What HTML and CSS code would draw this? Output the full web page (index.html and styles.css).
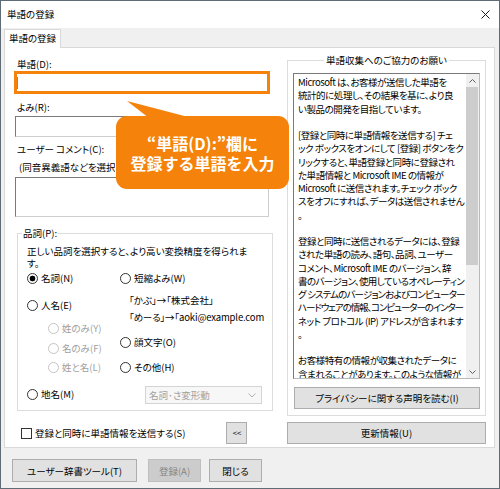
FILE: index.html
```html
<!DOCTYPE html>
<html lang="ja">
<head>
<meta charset="utf-8">
<title>単語の登録</title>
<link rel="stylesheet" href="styles.css">
</head>
<body>
<div class="window">
  <div class="titlebar">
    <span class="title">単語の登録</span>
    <svg class="close" width="9" height="9" viewBox="0 0 9 9"><path d="M0.5 0.5L8.5 8.5M8.5 0.5L0.5 8.5" stroke="#1a1a1a" stroke-width="1"/></svg>
  </div>
  <div class="body">
    <div class="tabs"><div class="tab">単語の登録</div></div>
    <div class="panel">
      <div class="left">
        <div class="label">単語(D):</div>
        <div class="highlight"><span class="caret"></span></div>
        <div class="label l-yomi">よみ(R):</div>
        <div class="input"></div>
        <div class="label l-comment">ユーザー コメント(C):</div>
        <div class="hint">(同音異義語などを選択するときに表示されます)</div>
        <div class="input textarea"></div>
        <div class="group pos">
          <span class="legend">品詞(P):</span>
          <p class="desc">正しい品詞を選択すると、より高い変換精度を得られま<br>す。</p>
          <div class="options">
            <div class="col">
              <div class="r"><span class="radio on"></span>名詞(N)</div>
              <div class="r a2"><span class="radio"></span>人名(E)</div>
              <div class="r dis a3"><span class="radio"></span>姓のみ(Y)</div>
              <div class="r dis a4"><span class="radio"></span>名のみ(F)</div>
              <div class="r dis a5"><span class="radio"></span>姓と名(L)</div>
              <div class="r a6"><span class="radio"></span>地名(M)</div>
            </div>
            <div class="col">
              <div class="r"><span class="radio"></span>短縮よみ(W)</div>
              <div class="ex b2">「かぶ」→「株式会社」</div>
              <div class="ex b3">「めーる」→「aoki@example.com</div>
              <div class="r b4"><span class="radio"></span>顔文字(O)</div>
              <div class="r b5"><span class="radio"></span>その他(H)</div>
              <div class="select">
                <span>名詞･さ変形動</span>
                <svg width="8" height="5" viewBox="0 0 8 5"><path d="M0.5 0.5L4 4L7.5 0.5" fill="none" stroke="#b0b0b0" stroke-width="1"/></svg>
              </div>
            </div>
          </div>
        </div>
      </div>

      <div class="right">
        <div class="group info">
          <span class="legend center">単語収集へのご協力のお願い</span>
          <div class="textbox">
            <div class="tb-text">Microsoft は、お客様が送信した単語を<br>統計的に処理し、その結果を基に、より良<br>い製品の開発を目指しています。<br><br>[登録と同時に単語情報を送信する] チェ<br>ック ボックスをオンにして [登録] ボタンをク<br>リックすると、単語登録と同時に登録され<br>た単語情報と Microsoft IME の情報が<br>Microsoft に送信されます。チェック ボック<br>スをオフにすれば、データは送信されません<br>。<br><br>登録と同時に送信されるデータには、登録<br>された単語の読み、語句、品詞、ユーザー<br>コメント、Microsoft IME のバージョン、辞<br><span class="tight">書のバージョン、使用しているオペレーティン</span><br><span class="tighter">グ システムのバージョンおよびコンピューター</span><br><span class="tightest">ハードウェアの情報、コンピューターのインター</span><br>ネット プロトコル (IP) アドレスが含まれます<br>。<br><br>お客様特有の情報が収集されたデータに<br>含まれることがあります。このような情報が</div>
            <div class="sb">
              <div class="arrow"><svg width="7" height="4" viewBox="0 0 7 4"><path d="M0.5 3.5L3.5 0.5L6.5 3.5" fill="none" stroke="#606060" stroke-width="1"/></svg></div>
              <div class="thumb"></div>
              <div class="track"></div>
              <div class="arrow"><svg width="7" height="4" viewBox="0 0 7 4"><path d="M0.5 0.5L3.5 3.5L6.5 0.5" fill="none" stroke="#606060" stroke-width="1"/></svg></div>
            </div>
          </div>
          <button class="btn privacy">プライバシーに関する声明を読む(I)</button>
        </div>
      </div>

      <div class="send">
        <span class="check"></span>
        <span>登録と同時に単語情報を送信する(S)</span>
        <button class="btn back">&lt; &lt;</button>
      </div>
      <button class="btn update">更新情報(U)</button>
    </div>

    <div class="footer">
      <button class="btn f1">ユーザー辞書ツール(T)</button>
      <button class="btn f2" disabled>登録(A)</button>
      <button class="btn f3">閉じる</button>
    </div>
  </div>

  <div class="callout">
    <span>“単語(D):”欄に</span>
    <span>登録する単語を入力</span>
  </div>
</div>
</body>
</html>
```

FILE: styles.css
```css
* { box-sizing: border-box; }
html, body { margin: 0; padding: 0; }
body {
  width: 500px;
  height: 489px;
  overflow: hidden;
  background: #fff;
  font-family: "Noto Sans CJK JP", "Noto Sans", sans-serif;
  font-size: 9.5px;
  line-height: 14px;
  color: #000;
  font-feature-settings: "palt" 1;
}

.window {
  position: relative;
  width: 500px;
  height: 489px;
  border: 1px solid #5f6b75;
  background: #f0f0f0;
  display: flex;
  flex-direction: column;
}

.titlebar {
  flex: none;
  height: 27px;
  background: #fff;
  display: flex;
  align-items: center;
  justify-content: space-between;
  padding: 0 9px 1px 6px;
}
.close { display: block; }

.body {
  flex: 1;
  padding: 1px 4px 0 3px;
}

.tabs { display: flex; height: 18px; }
.tab {
  position: relative;
  z-index: 1;
  width: 57px;
  height: 19px;
  margin-bottom: -1px;
  border: 1px solid #d9d9d9;
  border-bottom: none;
  background: #fff;
  text-align: center;
  line-height: 17px;
}

.panel {
  height: 401px;
  border: 1px solid #d9d9d9;
  background: #fff;
  display: grid;
  grid-template-columns: 258px 199px;
  grid-template-rows: 369px 22px;
  column-gap: 15px;
  padding: 5px 8px 3px 9px;
}

/* left column */
.left {
  display: flex;
  flex-direction: column;
  align-items: flex-start;
}
.label { margin-top: 4px; padding-left: 3px; }
.l-yomi { margin-top: 6px; }
.l-comment { margin-top: 5px; }
.hint {
  margin-top: 4px;
  padding-left: 5px;
  width: 101px;
  overflow: hidden;
  white-space: nowrap;
}

.highlight {
  width: 256px;
  height: 23px;
  border: 3px solid #f5820b;
  background: #fff;
  display: flex;
  align-items: center;
}
.caret { width: 1px; height: 12px; background: #8a8a8a; }

.input {
  width: 254px;
  height: 21px;
  margin-top: 2px;
  margin-left: 1px;
  border: 1px solid;
  border-color: #7a7a7a #cfcfcf #cfcfcf #7a7a7a;
  background: #fff;
}
.textarea { height: 40px; margin-top: 3px; }

.group {
  border: 1px solid #dcdcdc;
  display: flex;
  flex-direction: column;
  align-items: flex-start;
}
.legend {
  margin-top: -8px;
  margin-left: 4px;
  padding: 0 1px;
  background: #fff;
  white-space: nowrap;
}
.legend.center { align-self: center; margin-left: 0; padding: 0 2px; }

.pos {
  margin-top: 16px;
  margin-left: 3px;
  width: 256px;
  height: 178px;
}
.desc {
  margin: 6px 0 0;
  padding-left: 9px;
  line-height: 11.5px;
  white-space: nowrap;
}
.options {
  margin-top: 2px;
  padding-left: 9px;
  display: grid;
  grid-template-columns: 93px auto;
}
.col { display: flex; flex-direction: column; align-items: flex-start; }
.r {
  height: 14px;
  display: flex;
  align-items: center;
  gap: 3px;
  white-space: nowrap;
}
.radio {
  width: 11px;
  height: 11px;
  border: 1px solid #333;
  border-radius: 50%;
  background: #fff;
}
.radio.on { background: radial-gradient(circle, #000 0 2.6px, #fff 3.2px); }
.dis { color: #a0a0a0; }
.dis .radio { border-color: #c4c4c4; }
.a2 { margin-top: 13px; }
.a3 { margin-top: 9px; margin-left: 21px; }
.a4 { margin-top: 6px; margin-left: 21px; }
.a5 { margin-top: 5px; margin-left: 21px; }
.a6 { margin-top: 13px; }

.ex { margin-left: 9px; white-space: nowrap; }
.b2 { margin-top: 8px; }
.b3 { margin-top: 3px; letter-spacing: -0.15px; }
.b4 { margin-top: 11px; }
.b5 { margin-top: 11px; }
.select {
  margin-top: 12px;
  margin-left: 25px;
  width: 117px;
  height: 18px;
  border: 1px solid #d4d4d4;
  background: #f7f7f7;
  color: #a0a0a0;
  display: flex;
  align-items: center;
  justify-content: space-between;
  padding: 0 5px 0 3px;
}

.send {
  grid-column: 1;
  grid-row: 2;
  display: flex;
  align-items: center;
  gap: 3px;
  white-space: nowrap;
}
.check {
  width: 11px;
  height: 11px;
  margin-left: 7px;
  border: 1px solid #333;
  background: #fff;
}

/* right column */
.right {
  grid-column: 2;
  grid-row: 1;
  display: flex;
  flex-direction: column;
}
.info {
  margin-top: 7px;
  height: 356px;
}
.textbox {
  margin-top: 6px;
  margin-left: 5px;
  width: 187px;
  height: 306px;
  border: 1px solid;
  border-color: #7a7a7a #b9b9b9 #b9b9b9 #7a7a7a;
  background: #fff;
  display: flex;
}
.tb-text {
  flex: 1;
  min-width: 0;
  overflow: hidden;
  padding: 2px 0 0 4px;
  line-height: 13.25px;
  letter-spacing: -0.45px;
  white-space: nowrap;
}
.tight { letter-spacing: -0.6px; }
.tighter { letter-spacing: -0.85px; }
.tightest { letter-spacing: -1.1px; }
.sb {
  flex: none;
  width: 13px;
  display: flex;
  flex-direction: column;
  background: #f0f0f0;
}
.arrow {
  height: 13px;
  display: flex;
  align-items: center;
  justify-content: center;
}
.arrow svg { display: block; }
.thumb { height: 178px; margin-right: 1px; background: #cdcdcd; }
.track { flex: 1; }

.btn {
  font: inherit;
  font-feature-settings: inherit;
  color: #000;
  height: 22px;
  padding: 0;
  background: #e1e1e1;
  border: 1px solid #adadad;
  white-space: nowrap;
}
.btn:disabled {
  background: #cccccc;
  border-color: #bfbfbf;
  color: #858585;
}
.privacy { margin-top: 8px; margin-left: 6px; width: 186px; }
.back {
  width: 21px;
  margin-left: auto;
  margin-right: 25px;
  font-size: 8px;
  letter-spacing: -1px;
}
.update {
  grid-column: 2;
  grid-row: 2;
  width: 199px;
}

.footer {
  display: flex;
  margin-top: 11px;
  padding-left: 8px;
}
.f1 { width: 125px; height: 23px; }
.f2 { width: 53px; height: 23px; margin-left: 11px; }
.f3 { width: 53px; height: 23px; margin-left: 8px; }

/* callout overlay */
.callout {
  position: absolute;
  left: 115px;
  top: 115px;
  width: 173px;
  height: 73px;
  background: #f5820b;
  border-radius: 11px;
  color: #fff;
  font-size: 16px;
  font-weight: 700;
  line-height: 20px;
  font-feature-settings: normal;
  display: flex;
  flex-direction: column;
  align-items: center;
  justify-content: center;
  padding-top: 1px;
}
.callout::before {
  content: "";
  position: absolute;
  left: 0;
  top: -15px;
  width: 80px;
  height: 17px;
  background: #f5820b;
  clip-path: polygon(11px 0, 33px 17px, 76px 17px);
}
```
